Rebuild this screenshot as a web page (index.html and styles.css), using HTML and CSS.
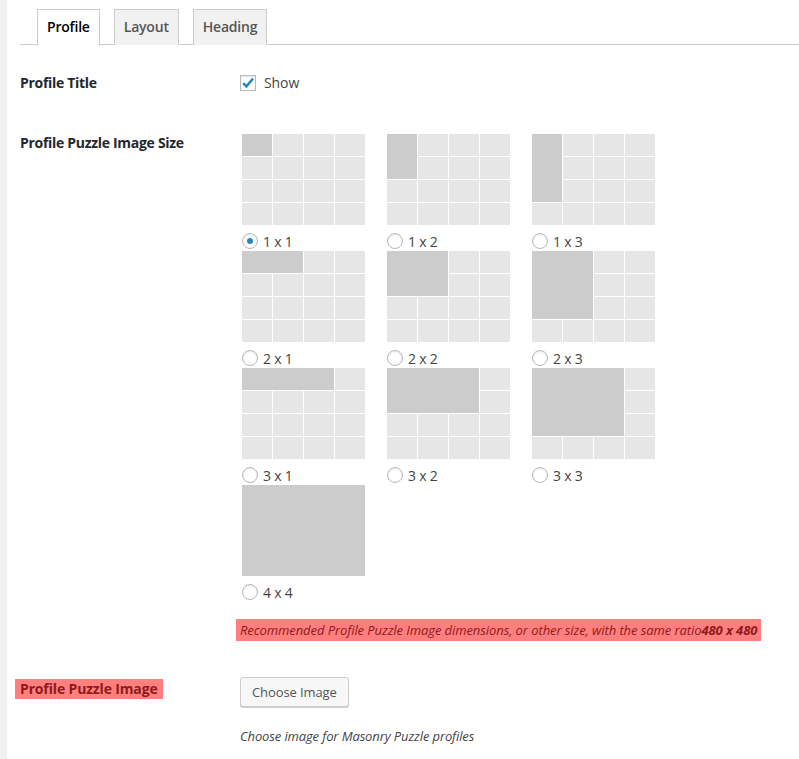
FILE: index.html
```html
<!DOCTYPE html>
<html>
<head>
<meta charset="utf-8">
<link rel="stylesheet" href="styles.css">
</head>
<body>
<div class="wrap">
  <nav class="tabs">
    <a class="tab active">Profile</a>
    <a class="tab">Layout</a>
    <a class="tab">Heading</a>
  </nav>

  <div class="row row-title">
    <div class="label">Profile Title</div>
    <div class="field">
      <label class="check"><span class="checkbox"><svg viewBox="0 0 16 16" width="16" height="16"><path d="M3.2 8.2 L6.4 11.4 L13 3.6" fill="none" stroke="#1e8cbe" stroke-width="2.4" stroke-linecap="butt"/></svg></span>Show</label>
    </div>
  </div>

  <div class="row row-size">
    <div class="label">Profile Puzzle Image Size</div>
    <div class="field">
      <div class="sizes">
        <div class="size"><div class="puzzle"><i class="big w1 h1"></i><i></i><i></i><i></i><i></i><i></i><i></i><i></i><i></i><i></i><i></i><i></i><i></i><i></i><i></i><i></i></div><label class="radio"><span class="dot checked"></span>1 x 1</label></div>
        <div class="size"><div class="puzzle"><i class="big w1 h2"></i><i></i><i></i><i></i><i></i><i></i><i></i><i></i><i></i><i></i><i></i><i></i><i></i><i></i><i></i></div><label class="radio"><span class="dot"></span>1 x 2</label></div>
        <div class="size"><div class="puzzle"><i class="big w1 h3"></i><i></i><i></i><i></i><i></i><i></i><i></i><i></i><i></i><i></i><i></i><i></i><i></i><i></i></div><label class="radio"><span class="dot"></span>1 x 3</label></div>

        <div class="size"><div class="puzzle"><i class="big w2 h1"></i><i></i><i></i><i></i><i></i><i></i><i></i><i></i><i></i><i></i><i></i><i></i><i></i><i></i><i></i></div><label class="radio"><span class="dot"></span>2 x 1</label></div>
        <div class="size"><div class="puzzle"><i class="big w2 h2"></i><i></i><i></i><i></i><i></i><i></i><i></i><i></i><i></i><i></i><i></i><i></i><i></i></div><label class="radio"><span class="dot"></span>2 x 2</label></div>
        <div class="size"><div class="puzzle"><i class="big w2 h3"></i><i></i><i></i><i></i><i></i><i></i><i></i><i></i><i></i><i></i><i></i></div><label class="radio"><span class="dot"></span>2 x 3</label></div>

        <div class="size"><div class="puzzle"><i class="big w3 h1"></i><i></i><i></i><i></i><i></i><i></i><i></i><i></i><i></i><i></i><i></i><i></i><i></i><i></i></div><label class="radio"><span class="dot"></span>3 x 1</label></div>
        <div class="size"><div class="puzzle"><i class="big w3 h2"></i><i></i><i></i><i></i><i></i><i></i><i></i><i></i><i></i><i></i><i></i></div><label class="radio"><span class="dot"></span>3 x 2</label></div>
        <div class="size"><div class="puzzle"><i class="big w3 h3"></i><i></i><i></i><i></i><i></i><i></i><i></i><i></i></div><label class="radio"><span class="dot"></span>3 x 3</label></div>

        <div class="size"><div class="puzzle"><i class="big w4 h4"></i></div><label class="radio"><span class="dot"></span>4 x 4</label></div>
      </div>
      <p class="note">Recommended Profile Puzzle Image dimensions, or other size, with the same ratio<b>480 x 480</b></p>
    </div>
  </div>

  <div class="row row-image">
    <div class="label"><span class="label-warn">Profile Puzzle Image</span></div>
    <div class="field">
      <button class="button" type="button">Choose Image</button>
      <p class="desc">Choose image for Masonry Puzzle profiles</p>
    </div>
  </div>
</div>
</body>
</html>
```
FILE: styles.css
```css
* { box-sizing: border-box; }
html, body { margin: 0; padding: 0; }
body {
  background: #f1f1f1;
  font-family: "Open Sans", "Noto Sans", sans-serif;
  color: #444;
  font-size: 13px;
}
.wrap {
  margin-left: 7px;
  background: #fff;
  min-height: 759px;
  padding: 9px 0 0 13px;
}
.tabs {
  display: flex;
  gap: 14px;
  padding-left: 17px;
  border-bottom: 1px solid #ccc;
  height: 36px;
}
.tab {
  display: block;
  height: 36px;
  padding: 0 9px;
  border: 1px solid #ccc;
  border-bottom: none;
  background: #f1f1f1;
  color: #555;
  font-size: 14px;
  font-weight: 600;
  letter-spacing: -0.2px;
  line-height: 34px;
}
.tab.active {
  background: #fff;
  color: #000;
  height: 37px;
}
.row { display: flex; }
.label {
  width: 220px;
  flex: none;
  font-size: 14px;
  font-weight: 700;
  color: #23282d;
  line-height: 18px;
  letter-spacing: -0.3px;
}
.field { flex: 1; }
.row-title { margin-top: 29px; }
.check {
  display: flex;
  align-items: center;
  gap: 8px;
  font-size: 14px;
  color: #444;
  line-height: 18px;
  letter-spacing: -0.1px;
}
.checkbox {
  width: 16px; height: 16px;
  border: 1px solid #b4b9be;
  box-shadow: inset 0 1px 2px rgba(0,0,0,.1);
  display: flex;
  align-items: center;
  justify-content: center;
}
.checkbox svg { display: block; margin: -1px; }
.row-size { margin-top: 42px; }
.sizes {
  display: grid;
  grid-template-columns: repeat(3, 123px);
  column-gap: 22px;
  margin-left: 2px;
}
.size { height: 117px; }
.puzzle {
  display: grid;
  grid-template-columns: repeat(4, 30px);
  grid-template-rows: repeat(4, 22px);
  gap: 1px;
  width: 123px;
  height: 91px;
  background: #fff;
}
.puzzle i { background: #e5e6e5; display: block; }
.puzzle i.big { background: #cbcccb; }
.w1 { grid-column: span 1; } .w2 { grid-column: span 2; } .w3 { grid-column: span 3; } .w4 { grid-column: span 4; }
.h1 { grid-row: span 1; } .h2 { grid-row: span 2; } .h3 { grid-row: span 3; } .h4 { grid-row: span 4; }
.radio {
  display: flex;
  align-items: center;
  gap: 5px;
  margin-top: 8px;
  height: 16px;
  font-size: 14px;
  color: #444;
  letter-spacing: -0.2px;
}
.dot {
  width: 16px; height: 16px;
  border: 1px solid #b4b9be;
  border-radius: 50%;
  box-shadow: inset 0 1px 2px rgba(0,0,0,.1);
  display: flex; align-items: center; justify-content: center;
}
.dot.checked::before {
  content: "";
  width: 6px; height: 6px;
  border-radius: 50%;
  background: #1e8cbe;
}
.note {
  display: inline-block;
  margin: 17px 0 0 -4px;
  padding: 2px 4px;
  background: #ff7f7f;
  color: #8f1a1a;
  font-style: italic;
  font-size: 13px;
  line-height: 18px;
  letter-spacing: -0.08px;
}
.note b { font-weight: 700; }
.row-image { margin-top: 36px; }
.label-warn {
  display: inline-block;
  margin-left: -5px;
  margin-top: 2px;
  padding: 1px 5px;
  background: #ff7f7f;
  color: #8f1a1a;
  letter-spacing: -0.15px;
}
.button {
  display: block;
  height: 30px;
  padding: 0 11px;
  border: 1px solid #ccc;
  border-radius: 3px;
  background: #f7f7f7;
  box-shadow: 0 1px 0 #ccc;
  color: #555;
  font-family: inherit;
  font-size: 13px;
  line-height: 28px;
  letter-spacing: -0.1px;
}
.desc {
  margin: 20px 0 0;
  font-style: italic;
  font-size: 13px;
  color: #444;
  letter-spacing: -0.12px;
}
```
